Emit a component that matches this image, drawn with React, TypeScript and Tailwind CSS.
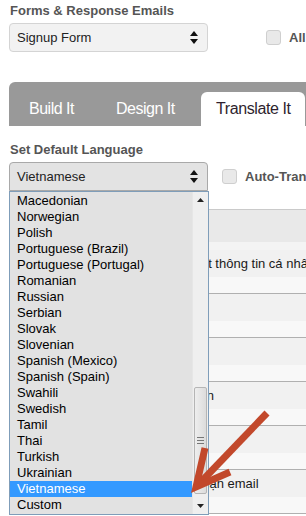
import React from "react";

const LANGUAGES = [
  "Macedonian", "Norwegian", "Polish", "Portuguese (Brazil)", "Portuguese (Portugal)",
  "Romanian", "Russian", "Serbian", "Slovak", "Slovenian", "Spanish (Mexico)",
  "Spanish (Spain)", "Swahili", "Swedish", "Tamil", "Thai", "Turkish", "Ukrainian",
  "Vietnamese", "Custom",
];

// rows of the translation table behind the open list
const ROWS = [
  { text: "Cập nhật thông tin cá nhân", pad: "pl-[150px]" },
  { text: "", pad: "" },
  { text: "", pad: "" },
  { text: "Trang cảm ơn", pad: "pl-[124px]" },
  { text: "", pad: "" },
  { text: "Xác nhận email", pad: "pl-[160px]" },
];

function UpDown() {
  return (
    <svg width="8" height="13" viewBox="0 0 8 13" className="shrink-0">
      <path d="M4 0 L8 5 L0 5 Z" fill="#111" />
      <path d="M0 8 L8 8 L4 13 Z" fill="#111" />
    </svg>
  );
}

function Checkbox() {
  return <div className="w-[15px] h-[15px] rounded-[3px] border border-[#cfcfcf] bg-[#e9e9e9] shrink-0" />;
}

export default function App() {
  return (
    <div className="relative w-[306px] h-[516px] overflow-hidden bg-white font-['Liberation_Sans',Arial,sans-serif]">
      {/* Forms picker */}
      <div className="pl-[10px] pt-[3px] text-[13px] leading-[16px] font-bold text-[#555]">Forms &amp; Response Emails</div>
      <div className="flex items-center ml-[9px] mt-[4px]">
        <div className="w-[199px] shrink-0 h-[29px] rounded-[4px] border border-[#d4d4d4] bg-[#f2f2f2] flex items-center justify-between pl-[7px] pr-[9px]">
          <span className="text-[13px] text-[#222]">Signup Form</span>
          <UpDown />
        </div>
        <div className="ml-[58px] flex items-center gap-[8px] shrink-0">
          <Checkbox />
          <span className="text-[13px] font-bold text-[#555]">All</span>
        </div>
      </div>

      {/* Tabs */}
      <div className="ml-[9px] mt-[30px] h-[44px] bg-[#999999] rounded-tl-[6px] flex items-end">
        <div className="w-[87px] shrink-0 h-[34px] pl-[20px] flex items-center text-[16px] tracking-[-0.5px] text-white">Build It</div>
        <div className="w-[105px] shrink-0 h-[34px] pl-[20px] flex items-center text-[16px] tracking-[-0.5px] text-white">Design It</div>
        <div className="w-[104px] shrink-0 h-[34px] pl-[15px] flex items-center text-[16px] tracking-[-0.4px] text-[#2e1f2e] bg-white rounded-t-[6px]">Translate It</div>
      </div>

      {/* Default language */}
      <div className="pl-[10px] mt-[16px] text-[13px] leading-[16px] font-bold text-[#555]">Set Default Language</div>
      <div className="flex items-center ml-[9px] mt-[4px]">
        <div className="w-[199px] shrink-0 h-[29px] rounded-t-[4px] border border-[#a9a9a9] bg-[#e3e3e3] flex items-center justify-between pl-[7px] pr-[9px]">
          <span className="text-[13px] text-[#222]">Vietnamese</span>
          <UpDown />
        </div>
        <div className="ml-[14px] flex items-center gap-[8px] shrink-0">
          <Checkbox />
          <span className="text-[13px] font-bold text-[#555] whitespace-nowrap">Auto-Translate</span>
        </div>
      </div>

      {/* Translation table */}
      <div className="ml-[9px] mt-[18px] border-t border-[#cacaca]">
        <div className="h-[32px] bg-[#e9e9e9]" />
        <div className="h-[8px] bg-[#f4f4f4]" />
        {ROWS.map((r, i) => (
          <div key={i} className="border-b border-[#b0b0b0]">
            <div className={`h-[27px] bg-[#f1f1f1] flex items-center text-[13px] text-[#1a1a1a] whitespace-nowrap ${r.pad}`}>{r.text}</div>
            <div className="h-[16px] bg-[#f8f8f8]" />
          </div>
        ))}
      </div>

      {/* Open list */}
      <div className="absolute left-[9px] top-[191px] w-[200px] h-[324px] border border-[#7f9db9] bg-[#e2e2e2] flex">
        <div className="flex-1 pt-[1px]">
          {LANGUAGES.map((l) => (
            <div
              key={l}
              className={`h-[16px] leading-[16px] pl-[7px] text-[13px] whitespace-nowrap ${l === "Vietnamese" ? "bg-[#3399ff] text-white" : "text-black"}`}
            >
              {l}
            </div>
          ))}
        </div>
        <div className="w-[16px] flex flex-col bg-[#efefef] border-l border-[#e6e6e6]">
          <div className="h-[16px] flex items-center justify-center">
            <svg width="7" height="4" viewBox="0 0 7 4"><path d="M3.5 0 L7 4 L0 4 Z" fill="#222" /></svg>
          </div>
          <div className="flex-1">
            <div className="mt-[179px] mx-[1px] h-[107px] rounded-[2px] border border-[#b5b5b5] bg-gradient-to-r from-[#eeeeee] to-[#dcdcdc] flex flex-col items-center justify-center gap-[2px]">
              <div className="w-[7px] h-[1px] bg-[#777]" />
              <div className="w-[7px] h-[1px] bg-[#777]" />
              <div className="w-[7px] h-[1px] bg-[#777]" />
            </div>
          </div>
          <div className="h-[16px] flex items-center justify-center">
            <svg width="7" height="4" viewBox="0 0 7 4"><path d="M0 0 L7 0 L3.5 4 Z" fill="#222" /></svg>
          </div>
        </div>
      </div>

      {/* Annotation arrow */}
      <svg className="absolute left-0 top-0 pointer-events-none" width="306" height="516" viewBox="0 0 306 516">
        <line x1="267" y1="413" x2="198" y2="485" stroke="#c2482b" strokeWidth="7" />
        <polyline points="205,448 196,487 230,472" fill="none" stroke="#c2482b" strokeWidth="7" strokeLinejoin="miter" />
      </svg>
    </div>
  );
}
